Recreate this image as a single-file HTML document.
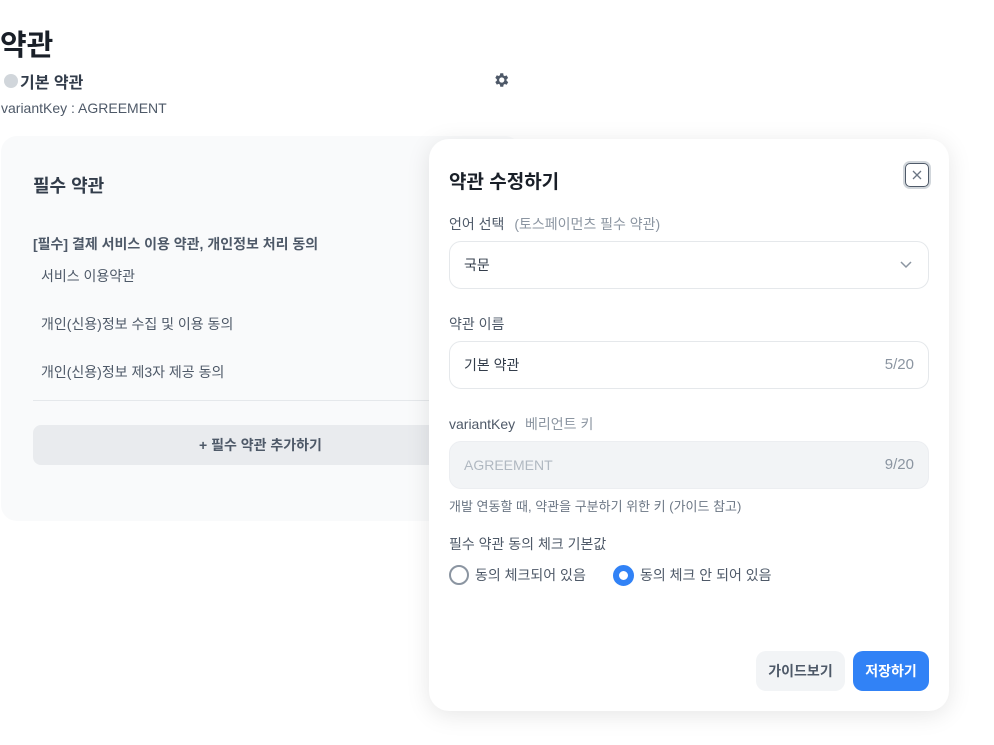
<!DOCTYPE html>
<html><head><meta charset="utf-8"><style>
*{box-sizing:border-box;margin:0;padding:0}
body{width:994px;height:745px;background:#fff;font-family:"Liberation Sans","Noto Sans CJK KR",sans-serif;color:#333d4b;position:relative;overflow:hidden}
.a{position:absolute}
.t{font-size:14px;color:#4e5968}
</style></head><body>
<div class="a" style="left:0;top:22px;font-size:29px;font-weight:700;color:#191f28">약관</div>
<div class="a" style="left:4px;top:74px;width:14px;height:14px;border-radius:50%;background:#d1d6db"></div>
<div class="a" style="left:20px;top:69px;font-size:16px;font-weight:700;color:#333d4b">기본 약관</div>
<svg class="a" style="left:492px;top:71px" width="18" height="18" viewBox="0 0 24 24"><path fill="#4e5968" d="M19.4 13a7.5 7.5 0 0 0 0-2l2.1-1.6-2-3.5-2.5 1a7 7 0 0 0-1.7-1L15 3h-4l-.4 2.6a7 7 0 0 0-1.7 1l-2.5-1-2 3.5L6.5 11a7.5 7.5 0 0 0 0 2l-2.1 1.6 2 3.5 2.5-1a7 7 0 0 0 1.7 1L11 21h4l.4-2.6a7 7 0 0 0 1.7-1l2.5 1 2-3.5zM13 15.5a3.5 3.5 0 1 1 0-7 3.5 3.5 0 0 1 0 7z"/></svg>
<div class="a" style="left:1px;top:100px;font-size:14px;color:#4e5968">variantKey : AGREEMENT</div>

<div class="a" style="left:1px;top:136px;width:520px;height:385px;background:#f9fafb;border-radius:16px"></div>
<div class="a" style="left:33px;top:172px;font-size:18px;font-weight:700;color:#333d4b">필수 약관</div>
<div class="a" style="left:33px;top:234px;font-size:14px;font-weight:700;color:#4e5968">[필수] 결제 서비스 이용 약관, 개인정보 처리 동의</div>
<div class="a t" style="left:41px;top:266px">서비스 이용약관</div>
<div class="a t" style="left:41px;top:314px">개인(신용)정보 수집 및 이용 동의</div>
<div class="a t" style="left:41px;top:362px">개인(신용)정보 제3자 제공 동의</div>
<div class="a" style="left:33px;top:400px;width:420px;height:1px;background:#e5e8eb"></div>
<div class="a" style="left:33px;top:425px;width:420px;height:40px;background:#e9ebee;border-radius:8px;font-size:14px;font-weight:700;color:#4e5968;line-height:40px;padding-left:166px">+ 필수 약관 추가하기</div>

<div class="a" style="left:429px;top:139px;width:520px;height:572px;background:#fff;border-radius:20px;box-shadow:0 4px 24px rgba(0,0,0,.10)"></div>
<div class="a" style="left:449px;top:167px;font-size:19px;font-weight:700;color:#191f28">약관 수정하기</div>
<div class="a" style="left:905px;top:163px;width:24px;height:24px;border:1.5px solid #4e5968;border-radius:5px;box-shadow:0 0 0 2px #d1d6db"></div>
<svg class="a" style="left:905px;top:163px" width="24" height="24" viewBox="0 0 24 24"><path d="M8 8l8 8M16 8l-8 8" stroke="#6b7684" stroke-width="1.3"/></svg>

<div class="a" style="left:449px;top:214px;font-size:14px;color:#4e5968">언어 선택 <span style="color:#8b95a1;margin-left:6px">(토스페이먼츠 필수 약관)</span></div>
<div class="a" style="left:449px;top:241px;width:480px;height:48px;border:1px solid #e5e8eb;border-radius:12px;font-size:14px;color:#333d4b;line-height:46px;padding-left:14px">국문</div>
<svg class="a" style="left:899px;top:259px" width="14" height="10" viewBox="0 0 14 10"><path d="M2 3l5 5 5-5" fill="none" stroke="#8b95a1" stroke-width="1.5"/></svg>

<div class="a" style="left:449px;top:314px;font-size:14px;color:#4e5968">약관 이름</div>
<div class="a" style="left:449px;top:341px;width:480px;height:48px;border:1px solid #e5e8eb;border-radius:12px;font-size:14px;color:#333d4b;line-height:46px;padding:0 14px">기본 약관<span style="float:right;color:#8b95a1;font-size:15px">5/20</span></div>

<div class="a" style="left:449px;top:414px;font-size:14px;color:#4e5968">variantKey <span style="color:#8b95a1;margin-left:6px">베리언트 키</span></div>
<div class="a" style="left:449px;top:441px;width:480px;height:48px;background:#f2f4f6;border:1px solid #eceef1;border-radius:12px;font-size:14px;color:#b0b8c1;line-height:46px;padding:0 14px">AGREEMENT<span style="float:right;color:#8b95a1;font-size:15px">9/20</span></div>
<div class="a" style="left:449px;top:496px;font-size:13px;color:#6b7684">개발 연동할 때, 약관을 구분하기 위한 키 (가이드 참고)</div>

<div class="a" style="left:449px;top:534px;font-size:14px;color:#4e5968">필수 약관 동의 체크 기본값</div>
<div class="a" style="left:449px;top:565px;width:20px;height:20px;border:2px solid #8b95a1;border-radius:50%"></div>
<div class="a" style="left:475px;top:565px;font-size:14px;color:#4e5968">동의 체크되어 있음</div>
<div class="a" style="left:613px;top:565px;width:21px;height:21px;border:6px solid #3182f6;border-radius:50%;background:#fff"></div>
<div class="a" style="left:640px;top:565px;font-size:14px;color:#4e5968">동의 체크 안 되어 있음</div>

<div class="a" style="left:756px;top:651px;width:89px;height:40px;background:#f2f4f6;border-radius:10px;font-size:14px;font-weight:700;color:#4e5968;line-height:40px;text-align:center">가이드보기</div>
<div class="a" style="left:853px;top:651px;width:76px;height:40px;background:#3182f6;border-radius:10px;font-size:14px;font-weight:700;color:#fff;line-height:40px;text-align:center">저장하기</div>
</body></html>
